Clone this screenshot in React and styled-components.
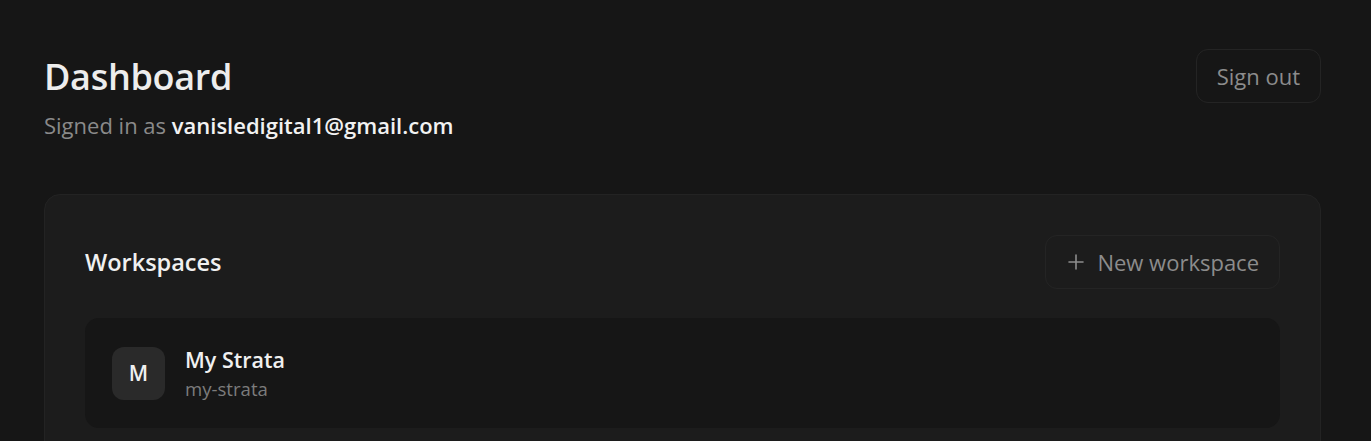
import React from "react";
import styled, { createGlobalStyle } from "styled-components";

const Global = createGlobalStyle`
  html, body { margin: 0; padding: 0; background: #161616; }
  body { font-family: "Open Sans", "Noto Sans", sans-serif; color: #ededed; }
  * { box-sizing: border-box; }
`;

const Page = styled.main`
  padding: 49px 50px 0 44px;
  min-height: 441px;
`;

const Header = styled.header`
  display: flex;
  justify-content: space-between;
  align-items: flex-start;
`;

const TitleBlock = styled.div`
  display: flex;
  flex-direction: column;
`;

const Title = styled.h1`
  margin: 0;
  font-size: 36px;
  font-weight: 600;
  line-height: 56px;
  color: #ededed;
  letter-spacing: -0.3px;
`;

const Subtitle = styled.p`
  margin: 4px 0 0;
  font-size: 22px;
  line-height: 32px;
  color: #8a8a8a;
`;

const Strong = styled.span`
  color: #f2f2f2;
  font-weight: 600;
`;

const GhostButton = styled.button`
  display: inline-flex;
  align-items: center;
  gap: ${(p) => (p.$withIcon ? "13px" : "0")};
  height: 54px;
  padding: ${(p) => (p.$withIcon ? "0 20px 0 22px" : "0 20px")};
  background: transparent;
  border: 1px solid #242424;
  border-radius: 12px;
  color: #8c8c8c;
  font-family: inherit;
  font-size: 22px;
  cursor: pointer;
`;

const PlusIcon = styled.svg`
  width: 16px;
  height: 16px;
  flex: none;
`;

const Card = styled.section`
  margin-top: 53px;
  background: #1c1c1c;
  border: 1px solid #232323;
  border-radius: 16px;
  padding: 40px 40px 40px;
`;

const CardHeader = styled.div`
  display: flex;
  justify-content: space-between;
  align-items: center;
  margin-bottom: 29px;
`;

const CardTitle = styled.h2`
  margin: 0;
  font-size: 23.5px;
  font-weight: 600;
  color: #f0f0f0;
`;

const Row = styled.div`
  display: flex;
  align-items: center;
  gap: 20px;
  height: 110px;
  padding: 0 27px;
  background: #161616;
  border-radius: 14px;
`;

const Avatar = styled.div`
  width: 53px;
  height: 53px;
  border-radius: 12px;
  background: #2a2a2a;
  display: flex;
  align-items: center;
  justify-content: center;
  font-size: 21px;
  font-weight: 600;
  color: #f0f0f0;
`;

const RowText = styled.div`
  display: flex;
  flex-direction: column;
  padding-top: 2px;
`;

const RowName = styled.span`
  font-size: 21.5px;
  font-weight: 600;
  line-height: 30px;
  color: #f0f0f0;
`;

const RowSlug = styled.span`
  font-size: 18.6px;
  line-height: 28px;
  color: #7c7c7c;
`;

export default function App() {
  return (
    <>
      <Global />
      <Page>
        <Header>
          <TitleBlock>
            <Title>Dashboard</Title>
            <Subtitle>
              Signed in as <Strong>vanisledigital1@gmail.com</Strong>
            </Subtitle>
          </TitleBlock>
          <GhostButton>Sign out</GhostButton>
        </Header>
        <Card>
          <CardHeader>
            <CardTitle>Workspaces</CardTitle>
            <GhostButton $withIcon>
              <PlusIcon viewBox="0 0 16 16" fill="none" stroke="currentColor" strokeWidth="1.6" strokeLinecap="round">
                <path d="M1 8h14M8 1v14" />
              </PlusIcon>
              New workspace
            </GhostButton>
          </CardHeader>
          <Row>
            <Avatar>M</Avatar>
            <RowText>
              <RowName>My Strata</RowName>
              <RowSlug>my-strata</RowSlug>
            </RowText>
          </Row>
        </Card>
      </Page>
    </>
  );
}
